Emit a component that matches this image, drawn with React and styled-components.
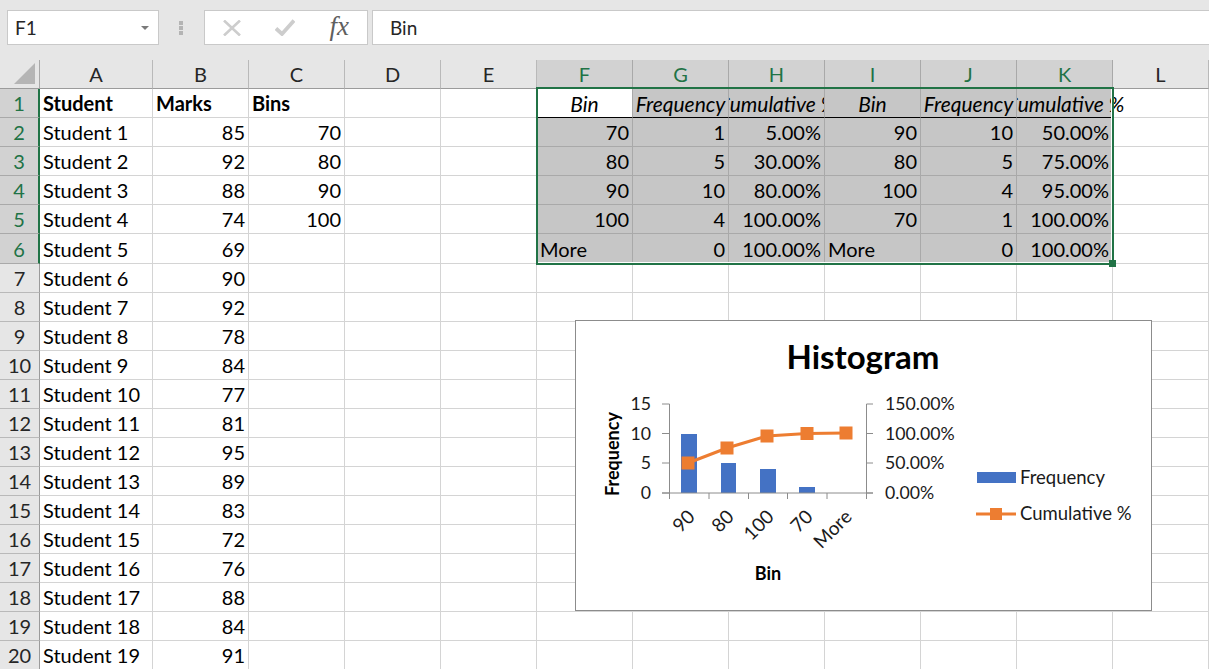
import React from "react";
import styled, { createGlobalStyle } from "styled-components";

const GlobalStyle = createGlobalStyle`
  html, body {
    margin: 0;
    padding: 0;
    height: 669px;
    overflow: hidden;
    background: #ffffff;
    font-family: Lato, "Open Sans", sans-serif;
  }
`;

const columns = ["A", "B", "C", "D", "E", "F", "G", "H", "I", "J", "K", "L"];
const selectedColumns = ["F", "G", "H", "I", "J", "K"];
const marks = [85, 92, 88, 74, 69, 90, 92, 78, 84, 77, 81, 95, 89, 83, 72, 76, 88, 84, 91];

// values for F1:K6, left to right
const outputTable = [
  ["Bin", "Frequency", "Cumulative %", "Bin", "Frequency", "Cumulative %"],
  [70, 1, "5.00%", 90, 10, "50.00%"],
  [80, 5, "30.00%", 80, 5, "75.00%"],
  [90, 10, "80.00%", 100, 4, "95.00%"],
  [100, 4, "100.00%", 70, 1, "100.00%"],
  ["More", 0, "100.00%", "More", 0, "100.00%"],
];

const cellFor = (col, row) => {
  if (col === "A") {
    return row === 1 ? { text: "Student", bold: true } : { text: `Student ${row - 1}` };
  }
  if (col === "B") {
    return row === 1 ? { text: "Marks", bold: true } : { text: marks[row - 2], right: true };
  }
  if (col === "C") {
    if (row === 1) return { text: "Bins", bold: true };
    const bins = [70, 80, 90, 100];
    return row <= 5 ? { text: bins[row - 2], right: true } : {};
  }
  const index = selectedColumns.indexOf(col);
  if (index < 0 || row > 6) return {};
  const value = outputTable[row - 1][index];
  if (row === 1) {
    return { text: value, heading: true, spill: col === "K" };
  }
  return { text: value, right: value !== "More" };
};

const App = () => {
  const rows = Array.from({ length: 20 }, (_, i) => i + 1);

  return (
    <Page>
      <GlobalStyle />
      <FormulaBar>
        <NameBox>
          F1
          <NameCaret />
        </NameBox>
        <Grip>
          <i />
          <i />
          <i />
        </Grip>
        <FunctionBox>
          <svg width="18" height="16" viewBox="0 0 18 16">
            <path d="M1 .5l16 15M17 .5L1 15.5" stroke="#cdcdcd" strokeWidth="2.6" fill="none" />
          </svg>
          <svg width="20" height="17" viewBox="0 0 20 17">
            <path d="M1 9.5l6 5.5L19 1.5" stroke="#cdcdcd" strokeWidth="3.8" fill="none" />
          </svg>
          <FxLabel>fx</FxLabel>
        </FunctionBox>
        <FormulaInput>Bin</FormulaInput>
      </FormulaBar>

      <Sheet>
        <Corner>
          <svg width="24" height="24" viewBox="0 0 24 24">
            <path d="M1 22L22 1v21z" fill="#b5b5b5" />
          </svg>
        </Corner>
        {columns.map((col) => (
          <ColumnHeader key={col} $selected={selectedColumns.includes(col)}>
            {col}
          </ColumnHeader>
        ))}

        {rows.map((row) => (
          <React.Fragment key={row}>
            <RowHeader $selected={row <= 6}>{row}</RowHeader>
            {columns.map((col) => {
              const cell = cellFor(col, row);
              const inRange = selectedColumns.includes(col) && row <= 6;
              return (
                <Cell
                  key={col}
                  $shaded={inRange && !(col === "F" && row === 1)}
                  $inRange={inRange}
                  $bold={cell.bold}
                  $right={cell.right}
                  $heading={cell.heading}
                  $spill={cell.spill}
                >
                  {cell.text}
                </Cell>
              );
            })}
          </React.Fragment>
        ))}

        <Selection>
          <FillHandle />
        </Selection>

        <ChartFrame>
          <Histogram />
        </ChartFrame>
      </Sheet>
    </Page>
  );
};

export default App;

const Histogram = () => {
  // coordinates below are page pixels, shifted into the chart frame
  const ox = 576;
  const oy = 321;
  const x = (v) => v - ox;
  const y = (v) => v - oy;

  const bars = [
    [681, 434, 16],
    [721, 463, 15],
    [760, 469, 16],
    [799, 487, 16],
  ];
  const points = [
    [688, 463],
    [727, 448],
    [767, 436],
    [807, 433.5],
    [846, 433],
  ];
  const xTicks = [669.5, 709, 748.5, 787.5, 827, 866.5];
  const yTicks = [404, 433.5, 463, 493];
  const leftLabels = ["15", "10", "5", "0"];
  const rightLabels = ["150.00%", "100.00%", "50.00%", "0.00%"];
  const xLabels = ["90", "80", "100", "70", "More"];
  const xLabelAnchors = [696, 735, 775, 814, 853];

  return (
    <svg width="575" height="289" viewBox="0 0 575 289" fontFamily="Lato, sans-serif">
      <text x={x(863)} y={y(369)} textAnchor="middle" fontSize="33" fontWeight="700" fill="#000">
        Histogram
      </text>

      {bars.map(([bx, by, w]) => (
        <rect key={bx} x={x(bx)} y={y(by)} width={w} height={493 - by} fill="#4472c4" />
      ))}

      <g stroke="#8c8c8c" strokeWidth="1" fill="none">
        <path d={`M${x(669.5)} ${y(404)}V${y(493)}M${x(866.5)} ${y(404)}V${y(493)}`} />
        <path d={`M${x(662)} ${y(493)}H${x(873)}`} />
        {yTicks.map((t) => (
          <path key={t} d={`M${x(662)} ${y(t)}H${x(669.5)}M${x(866.5)} ${y(t)}H${x(873)}`} />
        ))}
        {xTicks.map((t) => (
          <path key={t} d={`M${x(t)} ${y(493)}V${y(499)}`} />
        ))}
      </g>

      <polyline
        points={points.map(([px, py]) => `${x(px)},${y(py)}`).join(" ")}
        fill="none"
        stroke="#ed7d31"
        strokeWidth="3"
      />
      {points.map(([px, py]) => (
        <rect key={px} x={x(px) - 6.5} y={y(py) - 6.5} width="13" height="13" fill="#ed7d31" />
      ))}

      <g fontSize="17.7" fill="#1a1a1a">
        {leftLabels.map((label, i) => (
          <text key={label} x={x(651)} y={y(yTicks[i]) + 6} textAnchor="end">
            {label}
          </text>
        ))}
        {rightLabels.map((label, i) => (
          <text key={label} x={x(885)} y={y(yTicks[i]) + 6}>
            {label}
          </text>
        ))}
        {xLabels.map((label, i) => (
          <text
            key={label}
            textAnchor="end"
            fontSize="19"
            transform={`translate(${x(xLabelAnchors[i])} ${y(518)}) rotate(-45)`}
          >
            {label}
          </text>
        ))}
        <text x={x(1020)} y={y(484)} fontSize="18.5">
          Frequency
        </text>
        <text x={x(1020)} y={y(520)} fontSize="18.5">
          Cumulative %
        </text>
      </g>

      <g fontSize="18" fontWeight="700" fill="#000">
        <text textAnchor="middle" transform={`translate(${x(619)} ${y(454)}) rotate(-90)`}>
          Frequency
        </text>
        <text x={x(768)} y={y(580)} textAnchor="middle">
          Bin
        </text>
      </g>

      <rect x={x(977)} y={y(472)} width="39" height="11" fill="#4472c4" />
      <path d={`M${x(976)} ${y(514)}H${x(1016)}`} stroke="#ed7d31" strokeWidth="3" />
      <rect x={x(990)} y={y(508)} width="12" height="12" fill="#ed7d31" />
    </svg>
  );
};

const Page = styled.div`
  width: 1209px;
  height: 669px;
  overflow: hidden;
  display: flex;
  flex-direction: column;
  color: #000000;
`;

const FormulaBar = styled.div`
  flex: 0 0 60px;
  box-sizing: border-box;
  padding-top: 10px;
  padding-left: 7px;
  background: #e6e6e6;
  display: flex;
  align-items: flex-start;
`;

const barBox = `
  height: 35px;
  box-sizing: border-box;
  background: #ffffff;
  border: 1px solid #c9c9c9;
  display: flex;
  align-items: center;
  font-size: 19px;
  color: #262626;
`;

const NameBox = styled.div`
  ${barBox}
  width: 152px;
  padding-left: 7px;
  position: relative;
`;

const NameCaret = styled.span`
  position: absolute;
  right: 9px;
  top: 15px;
  width: 0;
  height: 0;
  border-left: 4px solid transparent;
  border-right: 4px solid transparent;
  border-top: 4px solid #7a7a7a;
`;

const Grip = styled.div`
  width: 45px;
  height: 35px;
  box-sizing: border-box;
  padding-right: 2px;
  display: flex;
  flex-direction: column;
  align-items: center;
  justify-content: center;
  gap: 1px;

  i {
    display: block;
    width: 4px;
    height: 4px;
    background: #b4b4b4;
  }
`;

const FunctionBox = styled.div`
  ${barBox}
  width: 164px;
  padding: 0 18px 0 18px;
  justify-content: space-between;
`;

const FxLabel = styled.span`
  font-family: "Liberation Serif", serif;
  font-style: italic;
  font-size: 27px;
  line-height: 1;
  color: #5f5f5f;
  margin-bottom: 3px;
`;

const FormulaInput = styled.div`
  ${barBox}
  flex: 1;
  margin-left: 4px;
  padding-left: 17px;
  border-right: none;
`;

const Sheet = styled.div`
  position: relative;
  flex: none;
  display: grid;
  grid-template-columns: 40px 113px repeat(11, 96px);
  grid-template-rows: 29px repeat(5, 29px) 30px repeat(14, 29px);
  font-size: 20px;
`;

const Corner = styled.div`
  box-sizing: border-box;
  background: #e6e6e6;
  border-right: 1px solid #a8a8a8;
  border-bottom: 1px solid #9b9b9b;
  display: flex;
  align-items: flex-end;
  justify-content: flex-end;
  padding: 0 2px 2px 0;
`;

const ColumnHeader = styled.div`
  box-sizing: border-box;
  background: ${(p) => (p.$selected ? "#d2d2d2" : "#e6e6e6")};
  color: ${(p) => (p.$selected ? "#217346" : "#262626")};
  border-right: 1px solid ${(p) => (p.$selected ? "#a9a9a9" : "#b9b9b9")};
  border-bottom: 1px solid #9b9b9b;
  display: flex;
  align-items: center;
  justify-content: center;
`;

const RowHeader = styled.div`
  box-sizing: border-box;
  background: ${(p) => (p.$selected ? "#d2d2d2" : "#e6e6e6")};
  color: ${(p) => (p.$selected ? "#217346" : "#262626")};
  border-right: ${(p) => (p.$selected ? "2px solid #217346" : "1px solid #9b9b9b")};
  border-bottom: 1px solid ${(p) => (p.$selected ? "#a9a9a9" : "#b9b9b9")};
  display: flex;
  align-items: center;
  justify-content: center;
`;

const Cell = styled.div`
  box-sizing: border-box;
  min-width: 0;
  padding: 0 3px;
  background: ${(p) => (p.$shaded ? "#c6c6c6" : "#ffffff")};
  border-right: 1px solid ${(p) => (p.$inRange ? "#a9a9a9" : "#d4d4d4")};
  border-bottom: 1px solid ${(p) => (p.$heading ? "#000000" : p.$inRange ? "#a9a9a9" : "#d4d4d4")};
  display: flex;
  align-items: center;
  justify-content: ${(p) => (p.$heading ? "center" : p.$right ? "flex-end" : "flex-start")};
  white-space: nowrap;
  overflow: ${(p) => (p.$spill ? "visible" : "hidden")};
  clip-path: ${(p) => (p.$spill ? "inset(0 -60px 0 0)" : "none")};
  font-size: ${(p) => (p.$heading ? "21px" : "inherit")};
  font-weight: ${(p) => (p.$bold ? 700 : 400)};
  font-style: ${(p) => (p.$heading ? "italic" : "normal")};
`;

const Selection = styled.div`
  position: absolute;
  z-index: 1;
  grid-column: 7 / 13;
  grid-row: 2 / 8;
  top: -2px;
  left: -1px;
  right: -1px;
  bottom: -1px;
  border: 2px solid #217346;
  box-shadow: inset -1px -1px 0 #ffffff;
  pointer-events: none;
`;

const FillHandle = styled.div`
  position: absolute;
  right: -4px;
  bottom: -4px;
  width: 7px;
  height: 7px;
  background: #217346;
`;

const ChartFrame = styled.div`
  position: absolute;
  z-index: 2;
  left: 575px;
  top: 260px;
  width: 577px;
  height: 291px;
  box-sizing: border-box;
  background: #ffffff;
  border: 1px solid #8c8c8c;
`;
